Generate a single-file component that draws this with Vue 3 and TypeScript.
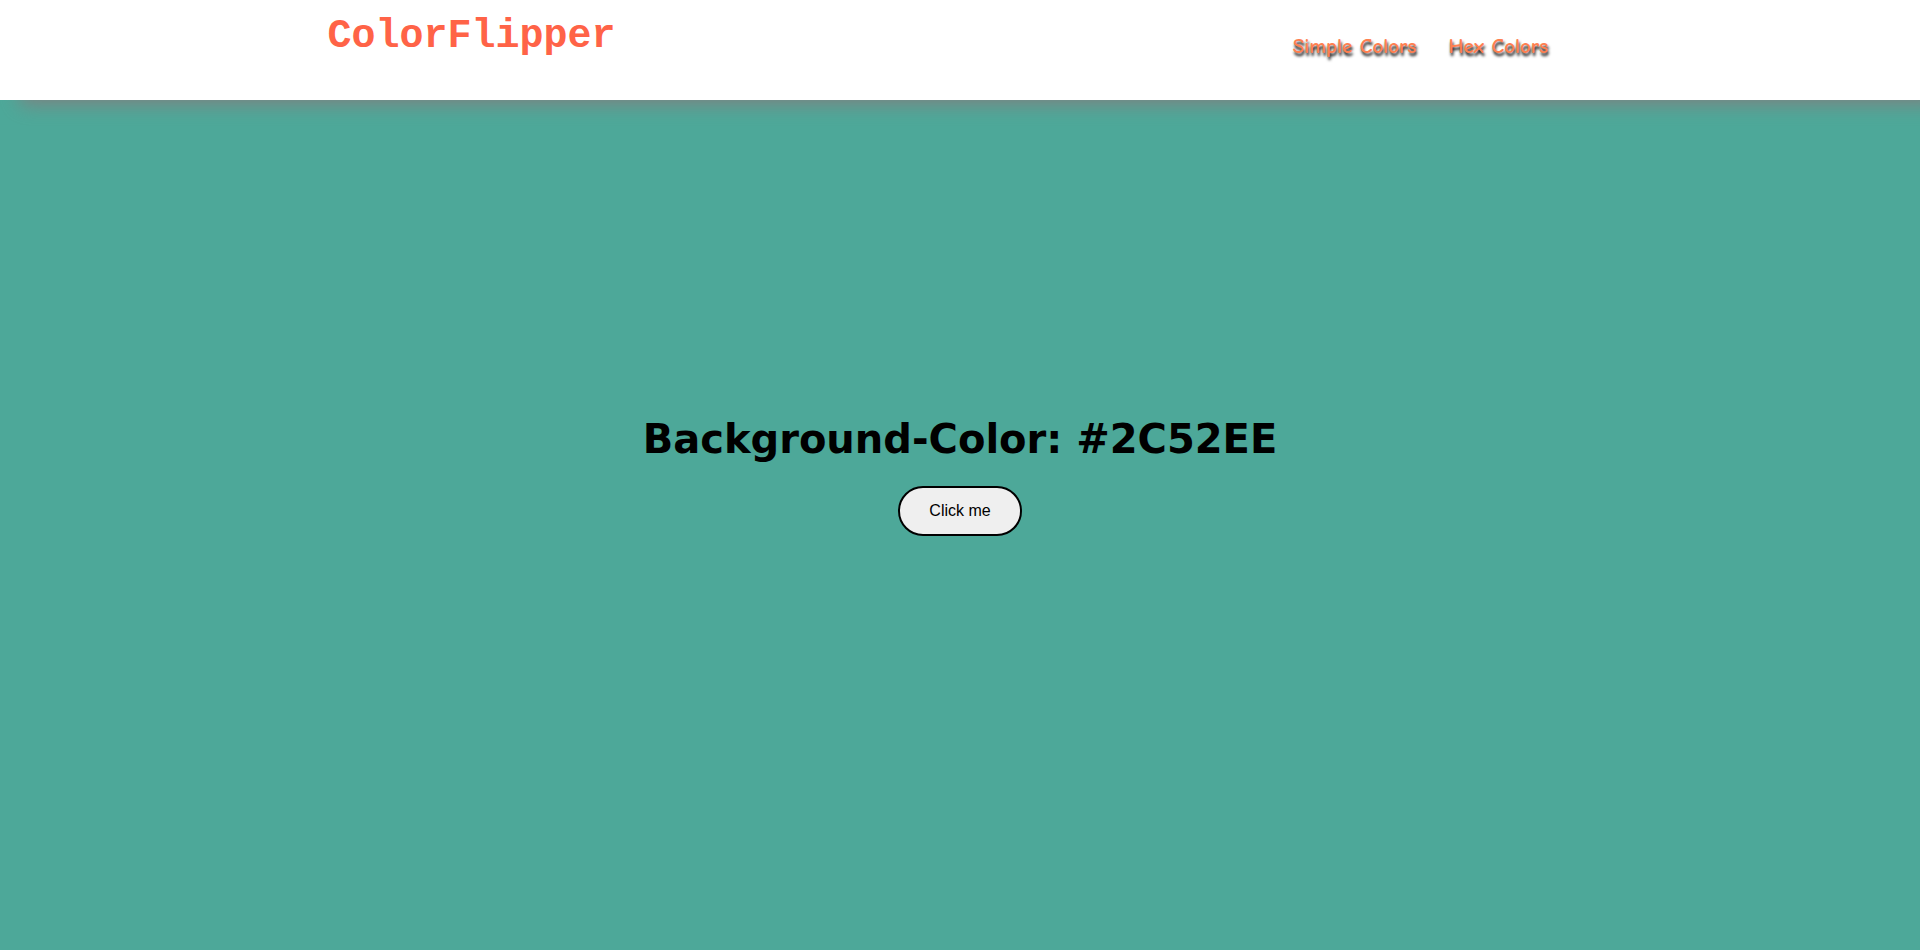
<script setup lang="ts">
import { ref } from 'vue'

const colorName = ref('#2C52EE')
const background = ref('#4da899')

function flip(): void {
  const value = Math.floor(Math.random() * 0x1000000)
  colorName.value = '#' + value.toString(16).toUpperCase().padStart(6, '0')
  background.value = colorName.value
}
</script>

<template>
  <div class="page" :style="{ backgroundColor: background }">
    <header class="bar">
      <h1 class="logo">ColorFlipper</h1>
      <nav class="links">
        <a href="#simple">Simple Colors</a>
        <a href="#hex">Hex Colors</a>
      </nav>
    </header>
    <main class="content">
      <h2 class="title">Background-Color: {{ colorName }}</h2>
      <button class="flip" type="button" @click="flip">Click me</button>
    </main>
  </div>
</template>

<style>
body {
  margin: 0;
}
</style>

<style scoped>
.page {
  min-height: 100vh;
  display: flex;
  flex-direction: column;
  overflow: hidden;
}
.bar {
  box-sizing: border-box;
  height: 100px;
  padding: 0 19% 0 17%;
  display: flex;
  justify-content: space-between;
  align-items: flex-start;
  background: #fff;
  box-shadow: 20px 4px 18px grey;
}
.logo {
  margin: 14px 0 0 1px;
  font: bold 40px/45px "Liberation Mono", monospace;
  color: tomato;
}
.links {
  display: flex;
  gap: 32px;
  padding: 32px 7px 0 0;
}
.links a {
  font: bold 21px/28px "Comic Sans MS", "Comic Neue", cursive;
  color: coral;
  text-decoration: none;
  text-shadow: 1px 3px 3px #000;
}
.content {
  flex: 1;
  display: flex;
  flex-direction: column;
  align-items: center;
  padding-top: 313px;
}
.title {
  margin: 0;
  font: bold 40px/52px "DejaVu Sans", Verdana, sans-serif;
  color: #000;
}
.flip {
  margin-top: 21px;
  padding: 14px 29px;
  border: 2px solid #000;
  border-radius: 25px;
  background: #efefef;
  color: #000;
  font: 16px/18px "Liberation Sans", Arial, sans-serif;
}
</style>
